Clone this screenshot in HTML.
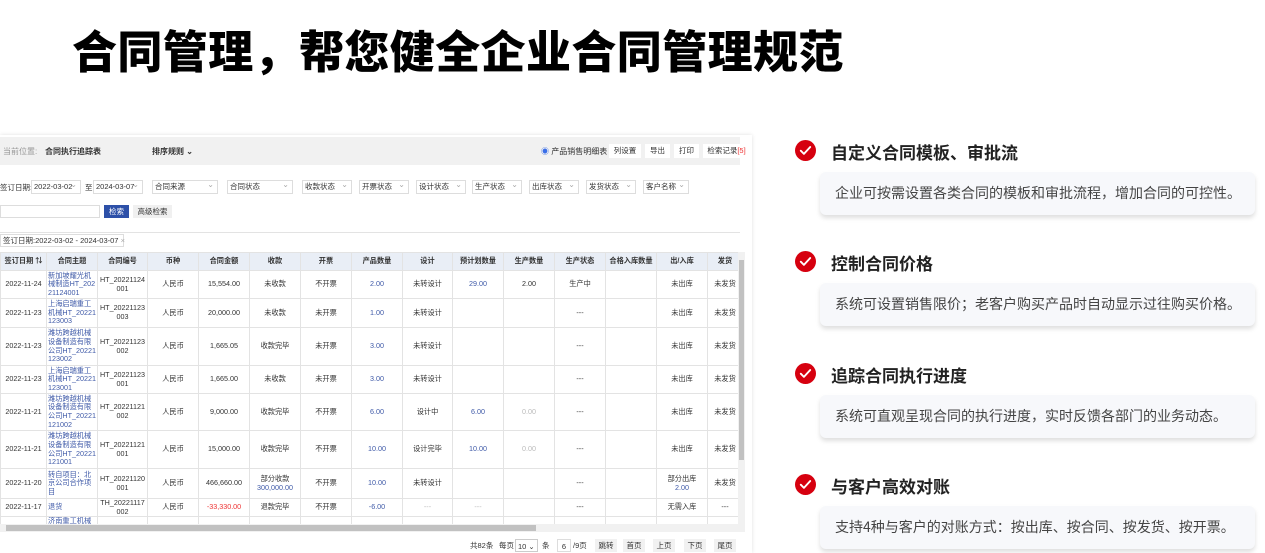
<!DOCTYPE html>
<html><head><meta charset="utf-8">
<style>
*{margin:0;padding:0;box-sizing:border-box}
body{width:1265px;height:553px;background:#fff;position:relative;overflow:hidden;font-family:"Liberation Sans","Noto Sans CJK SC",sans-serif;color:#333}
.abs{position:absolute}
h1{position:absolute;left:72px;top:16px;font-size:45px;font-weight:900;color:#000;letter-spacing:0.4px;white-space:nowrap;font-family:"Noto Sans CJK SC",sans-serif}
.panel{position:absolute;left:0;top:135px;width:752px;height:418px;background:#fff;box-shadow:0 0 4px rgba(0,0,0,.12);overflow:hidden}
.bar{position:absolute;left:0;top:2px;width:740px;height:28px;background:#f1f1f1;font-size:8px}
.btn{position:absolute;top:7px;height:14px;background:#fff;font-size:7.5px;line-height:14px;text-align:center;color:#333}
.sel{position:absolute;top:45px;height:14px;border:1px solid #ddd;font-size:7.5px;line-height:12px;padding-left:2px;color:#333;background:#fff;white-space:nowrap;overflow:hidden}
.sel:after{content:"⌄";position:absolute;right:3px;top:-2px;color:#aaa;font-size:8px}
table{position:absolute;left:0;top:117px;width:742px;border-collapse:collapse;table-layout:fixed;font-size:7.2px}
td,th{border:1px solid #e3e3e3;text-align:center;vertical-align:middle;overflow:hidden;line-height:8.6px;padding:0 1px;word-break:break-all}
th{background:#e9eef6;height:18px;font-weight:bold;color:#333;white-space:nowrap}
.l{color:#3f5aa8;text-align:left}
.b{color:#3f5aa8}
.g{color:#bbb}
.r{color:#e33}
.chk{position:absolute;left:795px;width:21px;height:21px}
.tt{position:absolute;left:831px;font-size:17px;font-weight:bold;color:#222;font-family:"Noto Sans CJK SC",sans-serif}
.card{position:absolute;left:820px;width:435px;height:43px;background:#f7f8fb;border-radius:6px;box-shadow:0 3px 5px rgba(0,0,0,.13);font-size:14px;color:#444;line-height:43px;padding-left:15px;font-family:"Noto Sans CJK SC",sans-serif;white-space:nowrap}
.pg{position:absolute;top:404px;height:13px;font-size:7.5px;line-height:13px;color:#333}
.pb{background:#f1f1f1;text-align:center;width:22px}
</style></head><body>
<h1>合同管理，帮您健全企业合同管理规范</h1>

<div class="panel">
 <div class="bar">
  <span class="abs" style="left:3px;top:9px;color:#999">当前位置:</span>
  <span class="abs" style="left:45px;top:9px;font-weight:bold">合同执行追踪表</span>
  <span class="abs" style="left:152px;top:9px;font-weight:bold">排序规则 ⌄</span>
  <span class="abs" style="left:541px;top:9px"><span style="color:#3a6ee8">◉</span> 产品销售明细表</span>
  <div class="btn" style="left:609px;width:32px">列设置</div>
  <div class="btn" style="left:645px;width:25px">导出</div>
  <div class="btn" style="left:674px;width:25px">打印</div>
  <div class="btn" style="left:703px;width:47px">检索记录<span style="color:#e33">[5]</span></div>
 </div>
 <span class="abs" style="left:0;top:47px;font-size:7.5px">签订日期:</span>
 <div class="sel" style="left:31px;width:50px">2022-03-02</div>
 <span class="abs" style="left:85px;top:47px;font-size:7.5px">至</span>
 <div class="sel" style="left:93px;width:50px">2024-03-07</div>
 <div class="sel" style="left:152px;width:66px">合同来源</div>
 <div class="sel" style="left:227px;width:66px">合同状态</div>
 <div class="sel" style="left:302px;width:50px">收款状态</div>
 <div class="sel" style="left:359px;width:50px">开票状态</div>
 <div class="sel" style="left:416px;width:50px">设计状态</div>
 <div class="sel" style="left:472px;width:50px">生产状态</div>
 <div class="sel" style="left:529px;width:50px">出库状态</div>
 <div class="sel" style="left:586px;width:50px">发货状态</div>
 <div class="sel" style="left:643px;width:46px">客户名称</div>
 <div class="abs" style="left:0;top:70px;width:100px;height:13px;border:1px solid #ddd"></div>
 <div class="abs" style="left:104px;top:70px;width:25px;height:13px;background:#2d50a8;color:#fff;font-size:7.5px;line-height:13px;text-align:center">检索</div>
 <div class="abs" style="left:133px;top:70px;width:39px;height:13px;background:#f0f0f0;font-size:7.5px;line-height:13px;text-align:center">高级检索</div>
 <div class="abs" style="left:0;top:97px;width:740px;border-top:1px solid #e3e3e3"></div>
 <div class="abs" style="left:0;top:99px;width:124px;height:13px;border:1px solid #ddd;font-size:7.5px;line-height:11px;padding-left:2px;white-space:nowrap">签订日期:2022-03-02 - 2024-03-07 <span style="color:#aaa">×</span></div>

 <table>
  <colgroup><col style="width:46px"><col style="width:51px"><col style="width:50px"><col style="width:51px"><col style="width:51px"><col style="width:51px"><col style="width:51px"><col style="width:51px"><col style="width:50px"><col style="width:51px"><col style="width:51px"><col style="width:51px"><col style="width:51px"><col style="width:51px"><col style="width:35px"></colgroup>
  <tr><th>签订日期 ⇅</th><th>合同主题</th><th>合同编号</th><th>币种</th><th>合同金额</th><th>收款</th><th>开票</th><th>产品数量</th><th>设计</th><th>预计划数量</th><th>生产数量</th><th>生产状态</th><th>合格入库数量</th><th>出/入库</th><th>发货</th></tr>
  <tr style="height:28px"><td>2022-11-24</td><td class="l">新加坡耀光机械制造HT_20221124001</td><td>HT_20221124<br>001</td><td>人民币</td><td>15,554.00</td><td>未收款</td><td>不开票</td><td class="b">2.00</td><td>未转设计</td><td class="b">29.00</td><td>2.00</td><td>生产中</td><td></td><td>未出库</td><td>未发货</td></tr>
  <tr style="height:29px"><td>2022-11-23</td><td class="l">上海启瑞重工机械HT_20221123003</td><td>HT_20221123<br>003</td><td>人民币</td><td>20,000.00</td><td>未收款</td><td>未开票</td><td class="b">1.00</td><td>未转设计</td><td></td><td></td><td>---</td><td></td><td>未出库</td><td>未发货</td></tr>
  <tr style="height:38px"><td>2022-11-23</td><td class="l">潍坊跨越机械设备制造有限公司HT_20221123002</td><td>HT_20221123<br>002</td><td>人民币</td><td>1,665.05</td><td>收款完毕</td><td>未开票</td><td class="b">3.00</td><td>未转设计</td><td></td><td></td><td>---</td><td></td><td>未出库</td><td>未发货</td></tr>
  <tr style="height:28px"><td>2022-11-23</td><td class="l">上海启瑞重工机械HT_20221123001</td><td>HT_20221123<br>001</td><td>人民币</td><td>1,665.00</td><td>未收款</td><td>未开票</td><td class="b">3.00</td><td>未转设计</td><td></td><td></td><td>---</td><td></td><td>未出库</td><td>未发货</td></tr>
  <tr style="height:37px"><td>2022-11-21</td><td class="l">潍坊跨越机械设备制造有限公司HT_20221121002</td><td>HT_20221121<br>002</td><td>人民币</td><td>9,000.00</td><td>收款完毕</td><td>不开票</td><td class="b">6.00</td><td>设计中</td><td class="b">6.00</td><td class="g">0.00</td><td>---</td><td></td><td>未出库</td><td>未发货</td></tr>
  <tr style="height:38px"><td>2022-11-21</td><td class="l">潍坊跨越机械设备制造有限公司HT_20221121001</td><td>HT_20221121<br>001</td><td>人民币</td><td>15,000.00</td><td>收款完毕</td><td>不开票</td><td class="b">10.00</td><td>设计完毕</td><td class="b">10.00</td><td class="g">0.00</td><td>---</td><td></td><td>未出库</td><td>未发货</td></tr>
  <tr style="height:30px"><td>2022-11-20</td><td class="l">转自项目：北京公司合作项目</td><td>HT_20221120<br>001</td><td>人民币</td><td>466,660.00</td><td>部分收款<br><span class="b">300,000.00</span></td><td>不开票</td><td class="b">10.00</td><td>未转设计</td><td></td><td></td><td>---</td><td></td><td>部分出库<br><span class="b">2.00</span></td><td>未发货</td></tr>
  <tr style="height:18px"><td>2022-11-17</td><td class="l">退货</td><td>TH_20221117<br>002</td><td>人民币</td><td class="r">-33,330.00</td><td>退款完毕</td><td>不开票</td><td class="b">-6.00</td><td class="g">---</td><td class="g">---</td><td></td><td>---</td><td></td><td>无需入库</td><td>---</td></tr>
  <tr style="height:9px"><td></td><td class="l" style="vertical-align:top">济南重工机械</td><td></td><td></td><td></td><td></td><td></td><td></td><td></td><td></td><td></td><td></td><td></td><td></td><td></td></tr>
 </table>
 <div class="abs" style="left:0;top:389px;width:740px;height:8px;background:#f1f1f1"></div>
 <div class="abs" style="left:6px;top:390px;width:530px;height:6px;background:#c1c1c1"></div>
 <div class="abs" style="left:738px;top:117px;width:7px;height:280px;background:#f1f1f1"></div>
 <div class="abs" style="left:739px;top:125px;width:5px;height:200px;background:#c1c1c1"></div>
 <div class="pg" style="left:470px">共82条</div>
 <div class="pg" style="left:499px">每页</div>
 <div class="pg" style="left:515px;width:23px;border:1px solid #ccc;padding-left:2px">10 ⌄</div>
 <div class="pg" style="left:542px">条</div>
 <div class="pg" style="left:557px;width:14px;border:1px solid #ddd;text-align:center">6</div>
 <div class="pg" style="left:573px">/9页</div>
 <div class="pg pb" style="left:595px">跳转</div>
 <div class="pg pb" style="left:623px">首页</div>
 <div class="pg pb" style="left:653px">上页</div>
 <div class="pg pb" style="left:684px">下页</div>
 <div class="pg pb" style="left:714px">尾页</div>
</div>

<svg class="chk" style="top:140px" viewBox="0 0 20 20"><circle cx="10" cy="10" r="10" fill="#d6000f"/><path d="M5.5 10.2l3 3 6-6.5" stroke="#fff" stroke-width="1.8" fill="none" stroke-linecap="round" stroke-linejoin="round"/></svg>
<div class="tt" style="top:139px">自定义合同模板、审批流</div>
<div class="card" style="top:172px">企业可按需设置各类合同的模板和审批流程，增加合同的可控性。</div>

<svg class="chk" style="top:251px" viewBox="0 0 20 20"><circle cx="10" cy="10" r="10" fill="#d6000f"/><path d="M5.5 10.2l3 3 6-6.5" stroke="#fff" stroke-width="1.8" fill="none" stroke-linecap="round" stroke-linejoin="round"/></svg>
<div class="tt" style="top:250px">控制合同价格</div>
<div class="card" style="top:283px">系统可设置销售限价；老客户购买产品时自动显示过往购买价格。</div>

<svg class="chk" style="top:363px" viewBox="0 0 20 20"><circle cx="10" cy="10" r="10" fill="#d6000f"/><path d="M5.5 10.2l3 3 6-6.5" stroke="#fff" stroke-width="1.8" fill="none" stroke-linecap="round" stroke-linejoin="round"/></svg>
<div class="tt" style="top:362px">追踪合同执行进度</div>
<div class="card" style="top:395px">系统可直观呈现合同的执行进度，实时反馈各部门的业务动态。</div>

<svg class="chk" style="top:474px" viewBox="0 0 20 20"><circle cx="10" cy="10" r="10" fill="#d6000f"/><path d="M5.5 10.2l3 3 6-6.5" stroke="#fff" stroke-width="1.8" fill="none" stroke-linecap="round" stroke-linejoin="round"/></svg>
<div class="tt" style="top:473px">与客户高效对账</div>
<div class="card" style="top:506px">支持4种与客户的对账方式：按出库、按合同、按发货、按开票。</div>
</body></html>
